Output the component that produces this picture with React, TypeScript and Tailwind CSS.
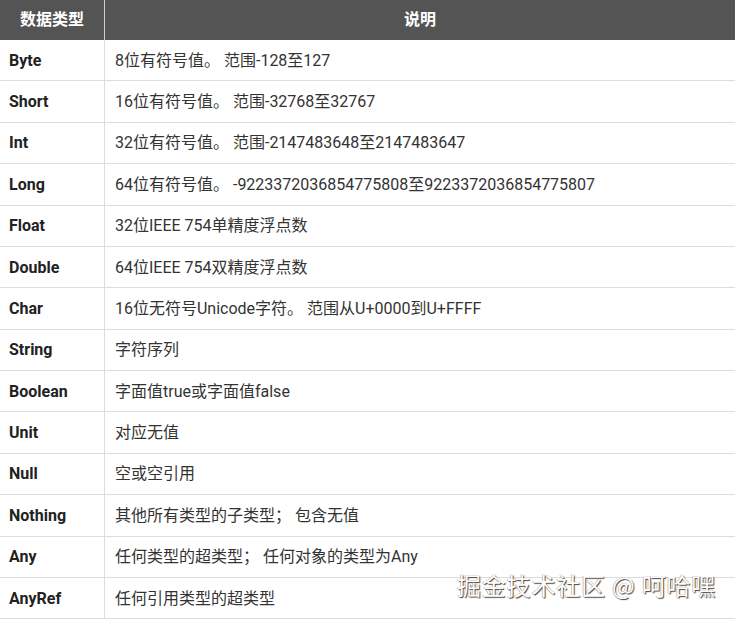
import React from "react";

const rows: [string, string][] = [
  ["Byte", "8位有符号值。 范围-128至127"],
  ["Short", "16位有符号值。 范围-32768至32767"],
  ["Int", "32位有符号值。 范围-2147483648至2147483647"],
  ["Long", "64位有符号值。 -9223372036854775808至9223372036854775807"],
  ["Float", "32位IEEE 754单精度浮点数"],
  ["Double", "64位IEEE 754双精度浮点数"],
  ["Char", "16位无符号Unicode字符。 范围从U+0000到U+FFFF"],
  ["String", "字符序列"],
  ["Boolean", "字面值true或字面值false"],
  ["Unit", "对应无值"],
  ["Null", "空或空引用"],
  ["Nothing", "其他所有类型的子类型； 包含无值"],
  ["Any", "任何类型的超类型； 任何对象的类型为Any"],
  ["AnyRef", "任何引用类型的超类型"],
];

export default function App() {
  return (
    <div
      className="relative w-[735px] h-[619px] overflow-hidden bg-white text-[16px] text-[#333]"
      style={{ fontFamily: 'Roboto, "Noto Sans CJK SC", sans-serif' }}
    >
      <div className="flex h-[40px] bg-[#545454] text-white font-bold">
        <div className="w-[105px] flex items-center justify-center border-r border-[#cfcfcf]">数据类型</div>
        <div className="flex-1 flex items-center justify-center">说明</div>
      </div>
      {rows.map(([a, b]) => (
        <div key={a} className="flex h-[41.38px] border-b border-[#dddddd]">
          <div className="w-[105px] shrink-0 flex items-center pl-[9px] pt-[1px] font-bold text-[#222] border-r border-[#dddddd]">{a}</div>
          <div className="flex-1 flex items-center pl-[10px] pt-[1px]">{b}</div>
        </div>
      ))}
      <div
        className="absolute left-[457px] top-[567px] text-[24px] text-white tracking-[0.8px]"
        style={{ fontFamily: '"Noto Sans CJK SC", sans-serif', textShadow: "1px 1px 1px #444, -0.5px -0.5px 0 #999" }}
      >
        掘金技术社区 @ 呵哈嘿
      </div>
    </div>
  );
}
